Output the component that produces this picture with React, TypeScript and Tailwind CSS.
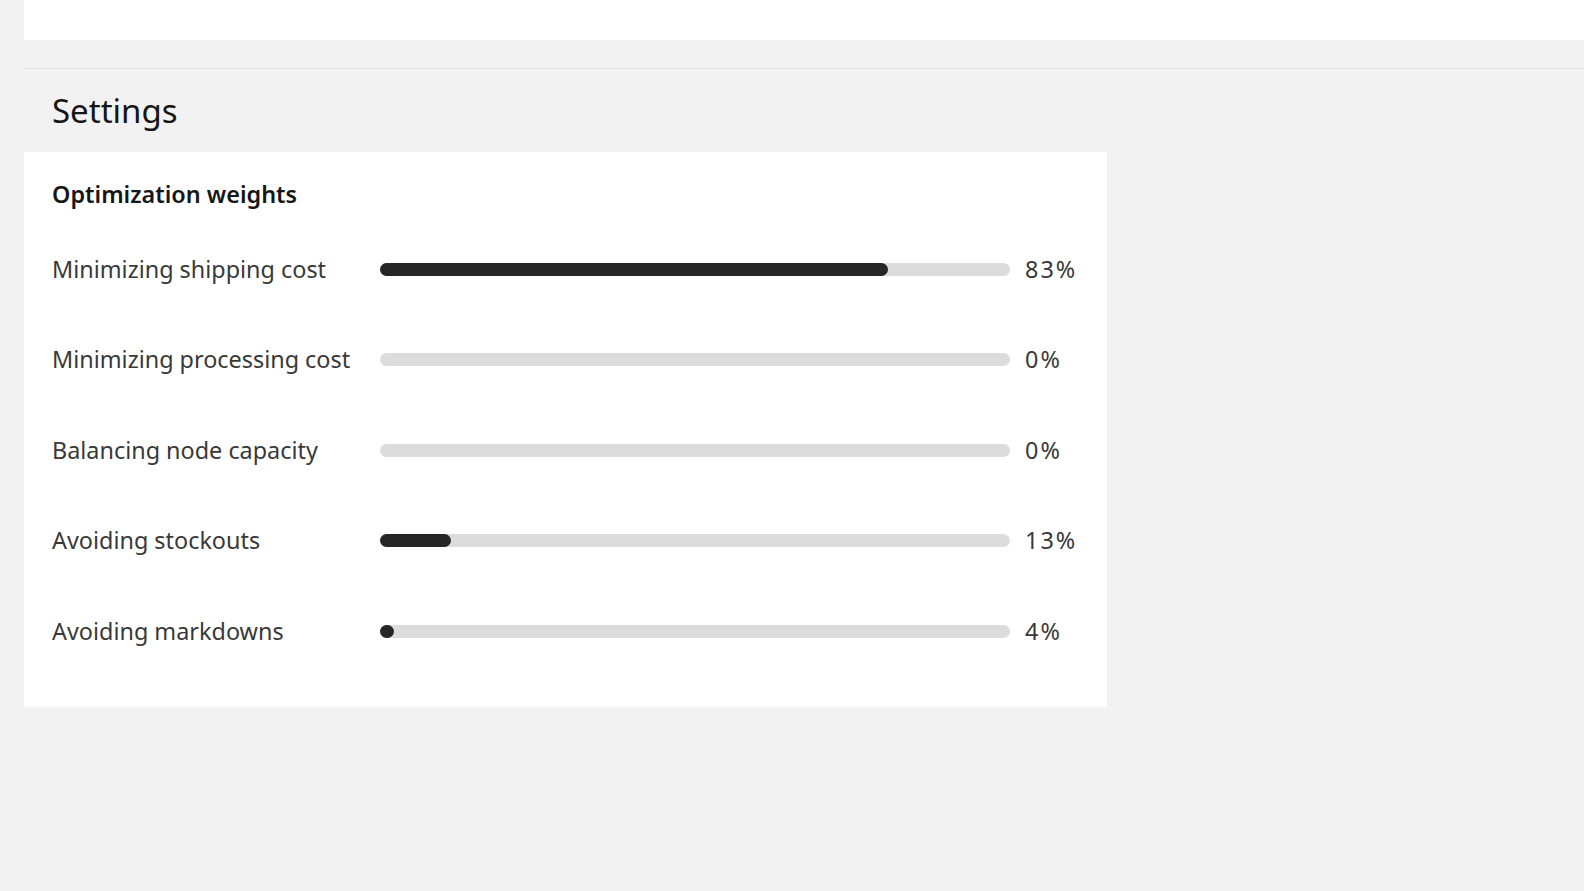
import React from 'react';

const weights = [
  { label: 'Minimizing shipping cost', value: 83, fill: 80.7 },
  { label: 'Minimizing processing cost', value: 0, fill: 0 },
  { label: 'Balancing node capacity', value: 0, fill: 0 },
  { label: 'Avoiding stockouts', value: 13, fill: 11.3 },
  { label: 'Avoiding markdowns', value: 4, fill: 2.2 },
];

const WeightRow: React.FC<{ label: string; value: number; fill: number }> = ({ label, value, fill }) => (
  <div className="flex items-center h-[90.5px]">
    <div className="w-[328px] shrink-0 text-[23.4px] text-[#393939]">{label}</div>
    <div className="w-[630px] h-[13px] rounded-full bg-[#dcdcdc] shrink-0">
      {fill > 0 && (
        <div className="h-full rounded-full bg-[#262626] min-w-[14px]" style={{ width: `${fill}%` }} />
      )}
    </div>
    <div className="pl-[15px] text-[23.4px] tracking-[2px] text-[#393939]">{value}%</div>
  </div>
);

export default function App() {
  return (
    <div className="min-h-screen w-full bg-[#f2f2f2] font-['Noto_Sans',sans-serif] pl-[24px]">
      <div className="h-[40px] bg-white" />
      <div className="h-[28px]" />
      <div className="border-t border-[#e0e0e0]">
        <h1 className="pl-[28px] pt-[18px] h-[83px] text-[33px] leading-[48px] text-[#161616]">Settings</h1>
        <div className="w-[1083px] bg-white pl-[28px] pt-[22px] pb-[30px]">
          <h2 className="text-[23.4px] leading-[40px] font-semibold text-[#161616] mb-[10px]">Optimization weights</h2>
          {weights.map((w) => (
            <WeightRow key={w.label} {...w} />
          ))}
        </div>
      </div>
    </div>
  );
}
